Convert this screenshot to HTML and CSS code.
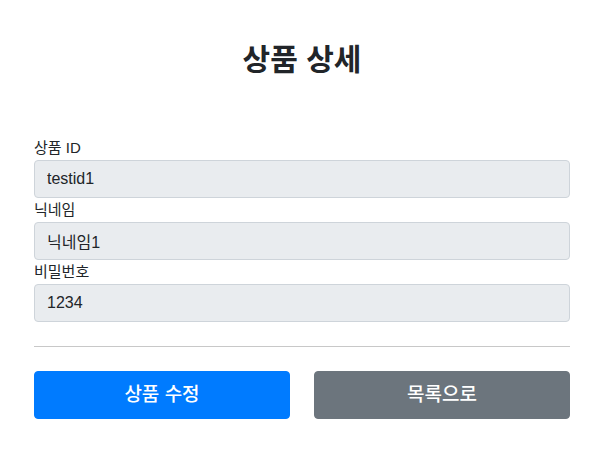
FILE: index.html
```html
<!DOCTYPE html>
<html lang="ko">
<head>
<meta charset="utf-8">
<title>상품 상세</title>
<link rel="stylesheet" href="styles.css">
</head>
<body>
<div class="container">
  <div class="header">
    <h2 class="title">상품 상세</h2>
  </div>
  <form class="form">
    <div class="field">
      <label class="label" for="itemId">상품 ID</label>
      <input class="control" id="itemId" type="text" value="testid1" readonly>
    </div>
    <div class="field">
      <label class="label" for="nick">닉네임</label>
      <input class="control" id="nick" type="text" value="닉네임1" readonly>
    </div>
    <div class="field">
      <label class="label" for="pw">비밀번호</label>
      <input class="control" id="pw" type="text" value="1234" readonly>
    </div>
    <hr class="divider">
    <div class="actions">
      <button class="btn btn-primary" type="button">상품 수정</button>
      <button class="btn btn-secondary" type="button">목록으로</button>
    </div>
  </form>
</div>
</body>
</html>
```
FILE: styles.css
```css
* { box-sizing: border-box; }
html, body { margin: 0; padding: 0; background: #fff; }
body {
  font-family: "Liberation Sans", "Noto Sans CJK KR", sans-serif;
  font-size: 16px;
  line-height: 1.5;
  color: #212529;
}
.container {
  width: 536px;
  margin-left: 34px;
}
.header {
  padding: 39px 0 61px;
  text-align: center;
}
.title {
  margin: 0;
  font-size: 30px;
  font-weight: 700;
  line-height: 36px;
  font-family: "Noto Sans CJK KR", sans-serif;
}
.form { margin: 0; }
.field { display: flex; flex-direction: column; }
.label {
  display: block;
  font-size: 15px;
  line-height: 24px;
  height: 24px;
}
.control {
  display: block;
  width: 100%;
  height: 38px;
  padding: 6px 12px;
  font-family: inherit;
  font-size: 16px;
  line-height: 1.5;
  color: #212529;
  background: #e9ecef;
  border: 1px solid #ced4da;
  border-radius: 4px;
  outline: none;
}
.divider {
  margin: 24px 0;
  border: 0;
  border-top: 1px solid #c8c8c8;
  height: 0;
}
.actions {
  display: grid;
  grid-template-columns: 1fr 1fr;
  column-gap: 24px;
}
.btn {
  height: 48px;
  padding: 8px 16px;
  font-family: inherit;
  font-size: 19px;
  font-weight: 500;
  line-height: 30px;
  color: #fff;
  border: 1px solid transparent;
  border-radius: 4px;
  text-align: center;
}
.btn-primary { background: #007bff; border-color: #007bff; }
.btn-secondary { background: #6c757d; border-color: #6c757d; }
```
